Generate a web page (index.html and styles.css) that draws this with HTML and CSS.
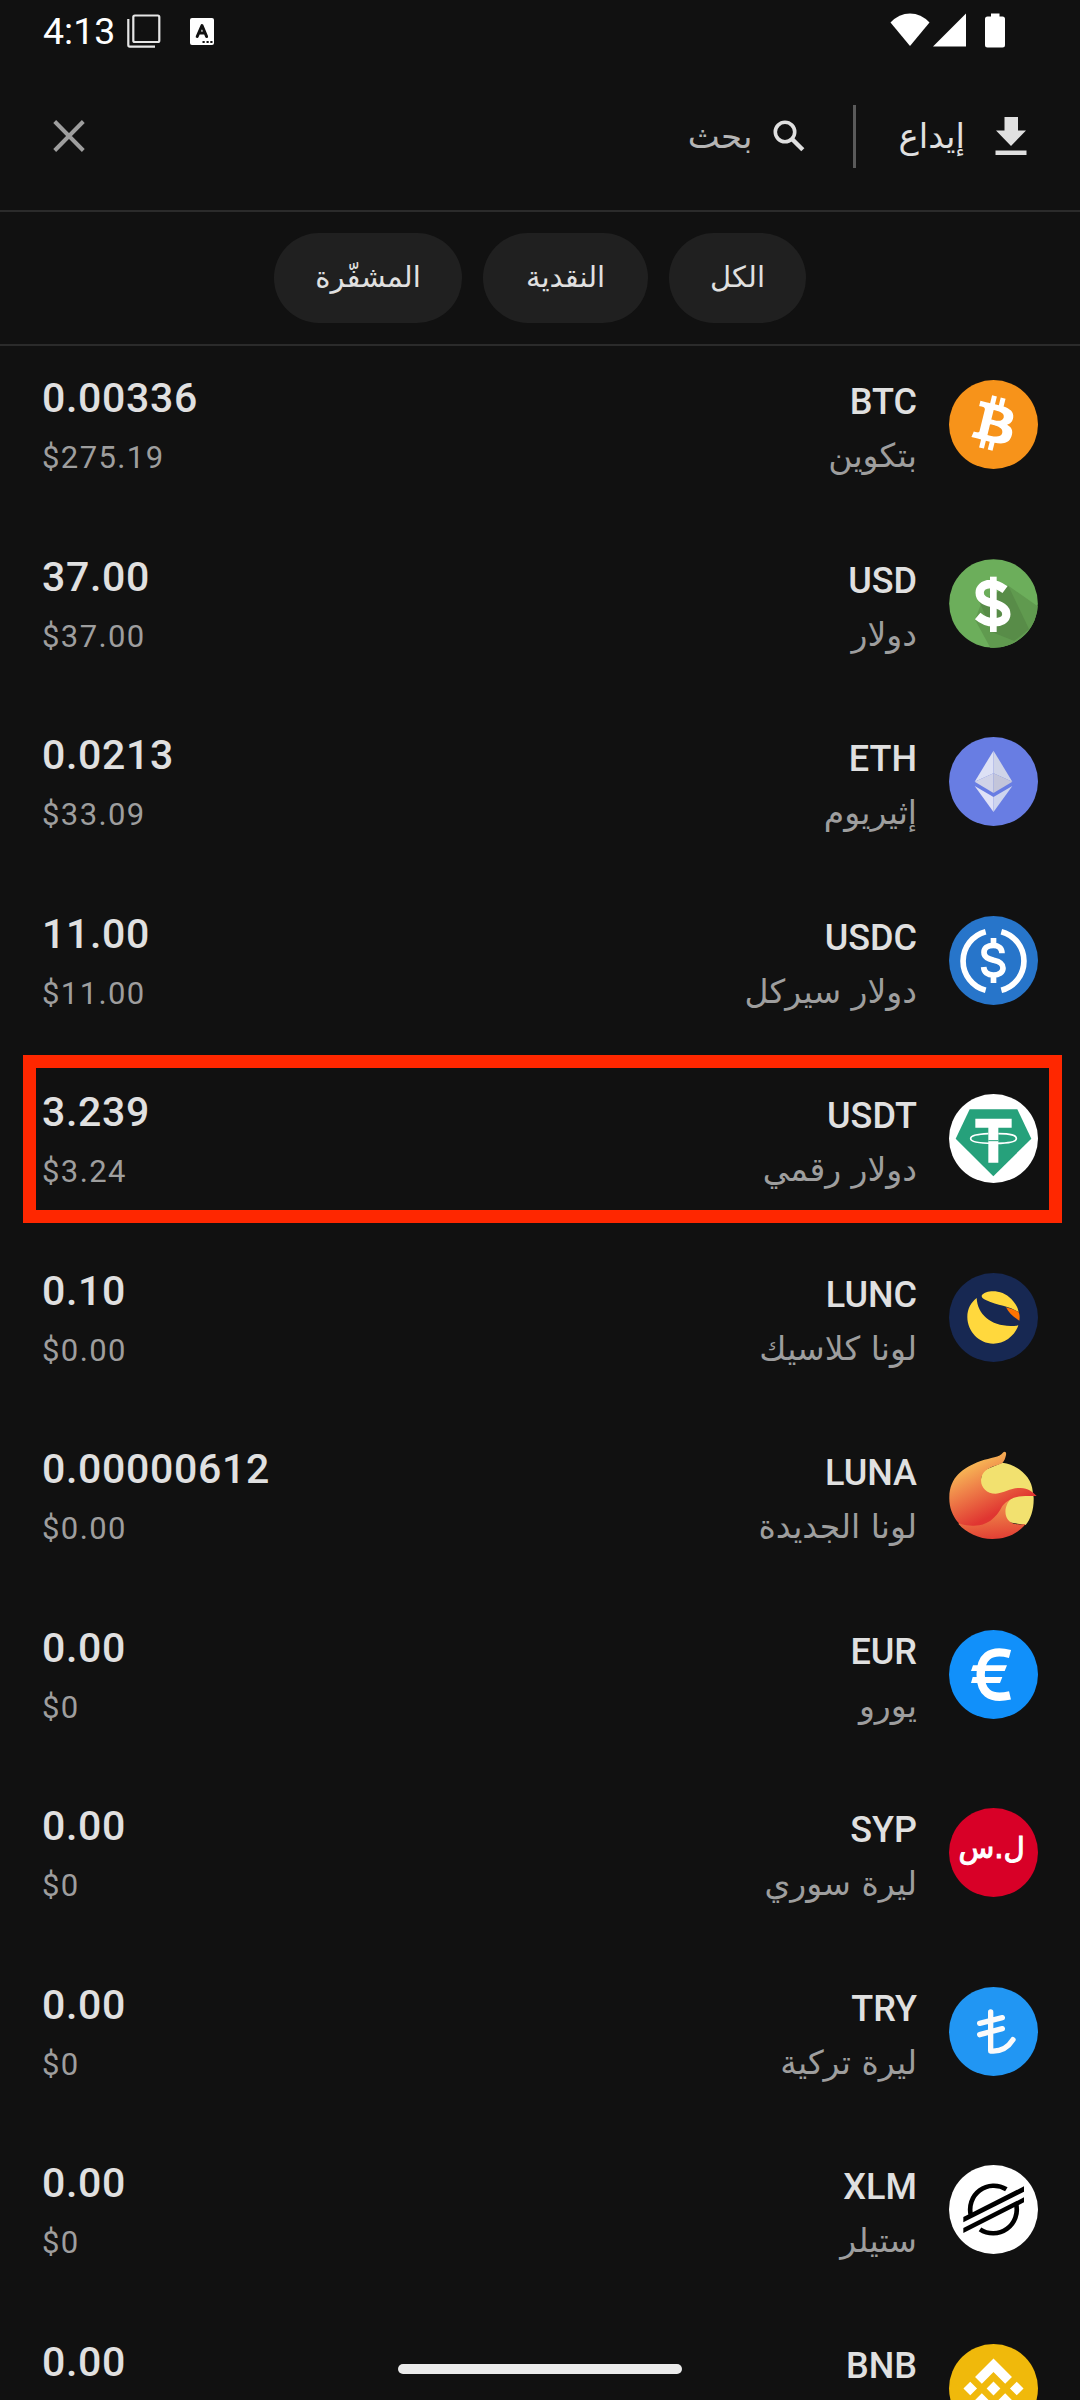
FILE: index.html
```
<!DOCTYPE html>
<html lang="ar" dir="rtl">
<head>
  <meta charset="UTF-8" />
  <meta name="viewport" content="width=device-width, initial-scale=1" />
  <title>المحفظة</title>
  <link rel="stylesheet" href="styles.css">
</head>
<body>
  <div class="screen">
    <div class="status-bar" dir="ltr">
      <span class="clock">4:13</span>
      <svg class="icon-copy" width="34" height="34" viewBox="0 0 34 34" fill="none" stroke="#e6e6e6" stroke-width="2.2">
        <rect x="6.3" y="1.5" width="26" height="26.5" rx="1.5" />
        <path d="M1.3 5V31q0 1.6 1.6 1.6H28" />
      </svg>
      <svg class="icon-lang" width="24" height="27" viewBox="0 0 24 27">
        <rect width="24" height="27" rx="2" fill="#fff" />
        <path d="M7.2 18.5 12 7.5l4.6 11M9 15h6" fill="none" stroke="#111" stroke-width="3" stroke-linecap="round" stroke-linejoin="round" />
        <path d="M12.5 24h2.2M16.5 24h2.2M20.3 24h2.2" stroke="#111" stroke-width="2.2" />
      </svg>
      <svg class="icon-signal" width="116" height="36" viewBox="0 0 116 36" fill="#fff">
        <path d="M.5 9.5Q9 .5 20 .5T39.5 9.5L20 33Z" />
        <path d="M76 .5V33.500H43Z" />
        <path d="M101 .5h8.500v3h3q2.500 0 2.500 2.500v26q0 2.500-2.500 2.500h-15q-2.500 0-2.500-2.500v-26q0-2.500 2.500-2.500h3.500Z" />
      </svg>
    </div>

    <header class="toolbar">
      <svg class="icon-deposit" width="32" height="38" viewBox="0 0 32 38" fill="#e0e0e0">
        <path d="M9.500 0h13.500v13.500h8L16 29 1 13.500h8.500Z" />
        <rect x=".5" y="33.500" width="31" height="4.500" />
      </svg>
      <span class="deposit">إيداع</span>
      <span class="separator"></span>
      <svg class="icon-search" width="32" height="32" viewBox="0 0 32 32" fill="none" stroke="#e0e0e0">
        <circle cx="12" cy="12" r="9.700" stroke-width="3.600" />
        <path d="M19.500 19.500 29.800 29.800" stroke-width="4.400" />
      </svg>
      <span class="search">بحث</span>
      <svg class="icon-close" width="32" height="32" viewBox="0 0 32 32" stroke="#9e9e9e" stroke-width="4">
        <path d="M1.700 1.500 30.300 30.500M30.300 1.500 1.700 30.500" />
      </svg>
    </header>

    <nav class="filters">
      <span class="chip chip-all">الكل</span>
      <span class="chip chip-fiat">النقدية</span>
      <span class="chip chip-crypto">المشفّرة</span>
    </nav>

    <main class="wallets">
      <div class="row">
        <svg class="coin" viewBox="0 0 32 32">
          <circle cx="16" cy="16" r="16" fill="#f7931a" />
          <path transform="translate(-.1 -.5)" fill="#fff" d="M23.189 14.02c.314-2.096-1.283-3.223-3.465-3.975l.708-2.84-1.728-.43-.69 2.765c-.454-.114-.92-.22-1.385-.326l.695-2.783L15.596 6l-.708 2.839c-.376-.086-.746-.17-1.104-.26l.002-.009-2.384-.595-.46 1.846s1.283.294 1.256.312c.7.175.826.638.805 1.006l-.806 3.235c.048.012.11.03.18.057l-.183-.045-1.13 4.532c-.086.212-.303.531-.793.41.018.025-1.256-.313-1.256-.313l-.858 1.978 2.25.561c.418.105.828.215 1.231.318l-.715 2.872 1.727.43.708-2.84c.472.127.93.245 1.378.357l-.706 2.828 1.728.43.715-2.866c2.948.558 5.164.333 6.097-2.333.752-2.146-.037-3.385-1.588-4.192 1.13-.26 1.98-1.003 2.207-2.538zm-3.95 5.538c-.533 2.147-4.148.986-5.32.695l.95-3.805c1.172.293 4.929.872 4.37 3.11zm.535-5.569c-.487 1.953-3.495.96-4.47.717l.86-3.45c.975.243 4.118.696 3.61 2.733z" />
        </svg>
        <div class="name"><b>BTC</b><span>بتكوين</span></div>
        <div class="balance" dir="ltr"><b>0.00336</b><span>$275.19</span></div>
      </div>

      <div class="row">
        <svg class="coin" viewBox="0 0 267 267">
          <circle cx="133.500" cy="133.500" r="133" fill="#6cae5b" />
          <path d="M178 80 266 142A133 133 0 0 1 124 266L78 182 98 130Z" fill="#609a4f" />
          <path d="M178 80 240 210 196 246 130 220 92 130Z" fill="#588c48" />
          <path d="M168 92C152 80 138 74 124 75C102 76 92 88 92 101C92 122 112 127 132 133C156 140 172 147 172 166C172 182 155 190 135 190C118 190 102 185 86 171" fill="none" stroke="#fff" stroke-width="25" />
          <path d="M133 53V219" stroke="#fff" stroke-width="20" />
        </svg>
        <div class="name"><b>USD</b><span>دولار</span></div>
        <div class="balance" dir="ltr"><b>37.00</b><span>$37.00</span></div>
      </div>

      <div class="row">
        <svg class="coin" viewBox="0 0 267 267">
          <circle cx="133.500" cy="133.500" r="133.500" fill="#687de3" />
          <path d="M133.500 41 77 134 133.500 109Z" fill="#dde1f5" />
          <path d="M133.500 41 190 134 133.500 109Z" fill="#cfd4e8" />
          <path d="M77 134 133.500 109V168Z" fill="#d0d3e8" />
          <path d="M190 134 133.500 109V168Z" fill="#c3c5da" />
          <path d="M77 147 133.500 180V225Z" fill="#dfe2f7" />
          <path d="M190 147 133.500 180V225Z" fill="#ced5ee" />
        </svg>
        <div class="name"><b>ETH</b><span>إثيريوم</span></div>
        <div class="balance" dir="ltr"><b>0.0213</b><span>$33.09</span></div>
      </div>

      <div class="row">
        <svg class="coin" viewBox="0 0 267 267" fill="none" stroke="#fff" stroke-width="17">
          <circle cx="133.500" cy="133.500" r="133.500" fill="#2775ca" stroke="none" />
          <path d="M110 47A91 91 0 0 0 110 223M157 47A91 91 0 0 1 157 223" />
          <path d="M159 112C159 96 148 88 133 88C115 88 105 97 105 109C105 124 118 128 134 133C152 137 162 142 162 156C162 170 150 177 133 177C116 177 105 169 104 153" />
          <path d="M133.500 66V88M133.500 178V201" />
        </svg>
        <div class="name"><b>USDC</b><span>دولار سيركل</span></div>
        <div class="balance" dir="ltr"><b>11.00</b><span>$11.00</span></div>
      </div>

      <div class="row highlighted">
        <svg class="coin" viewBox="0 0 267 267">
          <circle cx="133.500" cy="133.500" r="133.500" fill="#fff" />
          <path d="M62 46H205L247 134 133 247 20 134Z" fill="#26a17b" />
          <path d="M79 74H188V101H148V206H118V101H79Z" fill="#fff" />
          <path d="M118 119Q65 121 65 134T133 148T202 134T148 119" fill="none" stroke="#fff" stroke-width="5" />
          <path d="M118 140H148" stroke="#26a17b" stroke-width="3" />
        </svg>
        <div class="name"><b>USDT</b><span>دولار رقمي</span></div>
        <div class="balance" dir="ltr"><b>3.239</b><span>$3.24</span></div>
      </div>

      <div class="row">
        <svg class="coin" viewBox="0 0 267 267">
          <circle cx="133.500" cy="133.500" r="133.500" fill="#172852" />
          <path d="M83 75C86 130 135 167 208 157C197 190 165 212 133 212C90 212 55 175 55 132C55 108 66 88 83 75Z" fill="#ffd83d" />
          <path d="M99 66C112 50 160 48 187 78C200 92 207 104 209 118C185 100 145 98 112 82C100 76 96 72 99 66Z" fill="#ffd83d" />
          <path d="M171 103C185 107 200 111 209 118C213 128 212 136 211 143C190 130 178 118 171 103Z" fill="#ff7300" />
        </svg>
        <div class="name"><b>LUNC</b><span>لونا كلاسيك</span></div>
        <div class="balance" dir="ltr"><b>0.10</b><span>$0.00</span></div>
      </div>

      <div class="row">
        <svg class="coin" viewBox="0 0 267 267">
          <defs>
            <linearGradient id="luna-body" x1=".15" y1=".05" x2=".6" y2=".8">
              <stop offset="0" stop-color="#fbd35c" />
              <stop offset=".5" stop-color="#ef8249" />
              <stop offset="1" stop-color="#e03531" />
            </linearGradient>
            <linearGradient id="luna-tail" x1=".6" y1="0" x2=".75" y2="1">
              <stop offset="0" stop-color="#f3a251" />
              <stop offset="1" stop-color="#e23c33" />
            </linearGradient>
          </defs>
          <path d="M160 35C210 42 248 80 251 120L254 140C255 175 245 205 230 222L170 212 90 120 100 60Z" fill="#f2e16f" />
          <path d="M28 218L110 160 195 136C160 160 160 212 200 219C212 221 222 220 230 219C205 250 170 264 130 264C90 264 50 245 28 218Z" fill="url(#luna-tail)" />
          <path d="M1 138C2 80 40 50 95 30C125 20 152 20 163 4C168 -1 173 4 171 12C169 22 166 30 160 36C140 48 108 45 97 80C92 105 110 128 140 128C165 126 185 111 210 111C235 109 250 122 263 135C225 135 190 130 160 165C140 205 110 226 70 224C55 223 40 222 28 215C8 192 0 165 1 138Z" fill="url(#luna-body)" />
        </svg>
        <div class="name"><b>LUNA</b><span>لونا الجديدة</span></div>
        <div class="balance" dir="ltr"><b>0.00000612</b><span>$0.00</span></div>
      </div>

      <div class="row">
        <svg class="coin" viewBox="0 0 267 267">
          <circle cx="133.500" cy="133.500" r="133.500" fill="#1190fa" />
          <path d="M183 72C120 55 95 85 95 134C95 184 120 211 183 196" fill="none" stroke="#fff" stroke-width="25" />
          <path d="M72 106H174L167 123H66ZM71 141H160L153 159H66Z" fill="#fff" />
        </svg>
        <div class="name"><b>EUR</b><span>يورو</span></div>
        <div class="balance" dir="ltr"><b>0.00</b><span>$0</span></div>
      </div>

      <div class="row">
        <svg class="coin" viewBox="0 0 267 267">
          <circle cx="133.500" cy="133.500" r="133.500" fill="#d80027" />
          <text class="coin-text" x="128" y="150" text-anchor="middle">ل.س</text>
        </svg>
        <div class="name"><b>SYP</b><span>ليرة سوري</span></div>
        <div class="balance" dir="ltr"><b>0.00</b><span>$0</span></div>
      </div>

      <div class="row">
        <svg class="coin" viewBox="0 0 267 267">
          <circle cx="133.500" cy="133.500" r="133.500" fill="#2196f3" />
          <path d="M125 75V192Q168 196 192 158M92 109 160 92M92 143 160 125" fill="none" stroke="#fafafa" stroke-width="16" stroke-linecap="round" stroke-linejoin="round" />
        </svg>
        <div class="name"><b>TRY</b><span>ليرة تركية</span></div>
        <div class="balance" dir="ltr"><b>0.00</b><span>$0</span></div>
      </div>

      <div class="row">
        <svg class="coin" viewBox="0 0 267 267">
          <circle cx="133.500" cy="133.500" r="133.500" fill="#fff" />
          <path d="M66 152A71 71 0 0 1 172 73M201 116A71 71 0 0 1 93 193" fill="none" stroke="#000" stroke-width="14" />
          <path d="M43 156 225 64V80L43 172ZM43 189 225 97V112L43 204Z" />
        </svg>
        <div class="name"><b>XLM</b><span>ستيلر</span></div>
        <div class="balance" dir="ltr"><b>0.00</b><span>$0</span></div>
      </div>

      <div class="row">
        <svg class="coin" viewBox="0 0 32 32">
          <circle cx="16" cy="16" r="16" fill="#f0b90b" />
          <path transform="translate(-1.280 -1.280) scale(1.080)" fill="#fff" d="M12.116 14.404L16 10.520l3.886 3.886 2.260-2.260L16 6l-6.144 6.144 2.260 2.260zM6 16l2.260-2.260L10.520 16l-2.260 2.260L6 16zm6.116 1.596L16 21.480l3.886-3.886 2.260 2.259L16 26l-6.144-6.144-.003-.003 2.263-2.257zM21.480 16l2.260-2.260L26 16l-2.260 2.260L21.480 16zM16 13.706 18.292 16 16 18.294 13.706 16z" />
        </svg>
        <div class="name"><b>BNB</b></div>
        <div class="balance" dir="ltr"><b>0.00</b></div>
      </div>
    </main>

    <div class="home-indicator"></div>
  </div>
</body>
</html>
```
FILE: styles.css
```
html, body {
  margin: 0;
  padding: 0;
  background-color: #111;
  font-family: Roboto, "DejaVu Sans", sans-serif;
  overflow: hidden;
}

svg {
  display: block;
  flex-shrink: 0;
}

.screen {
  position: relative;
  width: 1080px;
  height: 2400px;
  overflow: hidden;
}

/* status bar */
.status-bar {
  display: flex;
  align-items: center;
  height: 62px;
  padding: 0 74px 0 43px;
  color: #fff;
}

.clock {
  width: 84px;
  font-size: 37.5px;
  line-height: 62px;
}

.icon-lang {
  margin-left: 29px;
}

.icon-signal {
  margin-left: auto;
}

/* toolbar */
.toolbar {
  display: flex;
  align-items: center;
  height: 148px;
  padding: 0 53px;
  border-bottom: 2px solid #2b2b2b;
  font-family: "DejaVu Sans", sans-serif;
  font-size: 34px;
}

.deposit {
  margin-right: 30px;
  color: #e0e0e0;
}

.separator {
  width: 3px;
  height: 63px;
  margin: 0 43px 0 48px;
  background-color: #5a5a5a;
}

.search {
  margin-right: 20px;
  color: #b5b5b5;
}

.icon-close {
  margin-right: auto;
}

/* filter chips */
.filters {
  display: flex;
  align-items: center;
  justify-content: center;
  gap: 21px;
  height: 132px;
  border-bottom: 2px solid #2b2b2b;
}

.chip {
  height: 90px;
  border-radius: 45px;
  background-color: #202020;
  color: #e0e0e0;
  font-family: "DejaVu Sans", sans-serif;
  font-size: 29px;
  line-height: 88px;
  text-align: center;
}

.chip-all {
  width: 137px;
}

.chip-fiat {
  width: 165px;
}

.chip-crypto {
  width: 188px;
}

/* balances */
.wallets {
  display: flex;
  flex-direction: column;
  gap: 89.55px;
  padding: 34px 42px 0 42px;
}

.row {
  position: relative;
  display: flex;
  align-items: flex-start;
  height: 89px;
}

.row b,
.row span {
  display: block;
  white-space: nowrap;
}

.coin {
  width: 89px;
  height: 89px;
}

.coin-text {
  fill: #fff;
  stroke: #fff;
  stroke-width: 3px;
  font-family: "DejaVu Sans", sans-serif;
  font-size: 88px;
}

.name {
  margin-right: 32px;
}

.name b {
  color: #e0e0e0;
  font-size: 36px;
  font-weight: 500;
  line-height: 44px;
}

.name span {
  margin-top: 6px;
  color: #9e9e9e;
  font-family: "DejaVu Sans", sans-serif;
  font-size: 33px;
  line-height: 52px;
}

.balance {
  margin-top: -6px;
  margin-right: auto;
}

.balance b {
  color: #e0e0e0;
  font-size: 41px;
  font-weight: 500;
  line-height: 48px;
  letter-spacing: 0.7px;
}

.balance span {
  margin-top: 16px;
  color: #9e9e9e;
  font-size: 31px;
  line-height: 40px;
  letter-spacing: 1.4px;
}

/* frame around the selected currency */
.highlighted::after {
  content: "";
  position: absolute;
  top: -39px;
  right: -24px;
  bottom: -40px;
  left: -19.5px;
  border: 13px solid #ff2700;
}

.home-indicator {
  position: absolute;
  left: 398px;
  top: 2364px;
  width: 284px;
  height: 10px;
  border-radius: 5px;
  background-color: #ebebeb;
}
```
